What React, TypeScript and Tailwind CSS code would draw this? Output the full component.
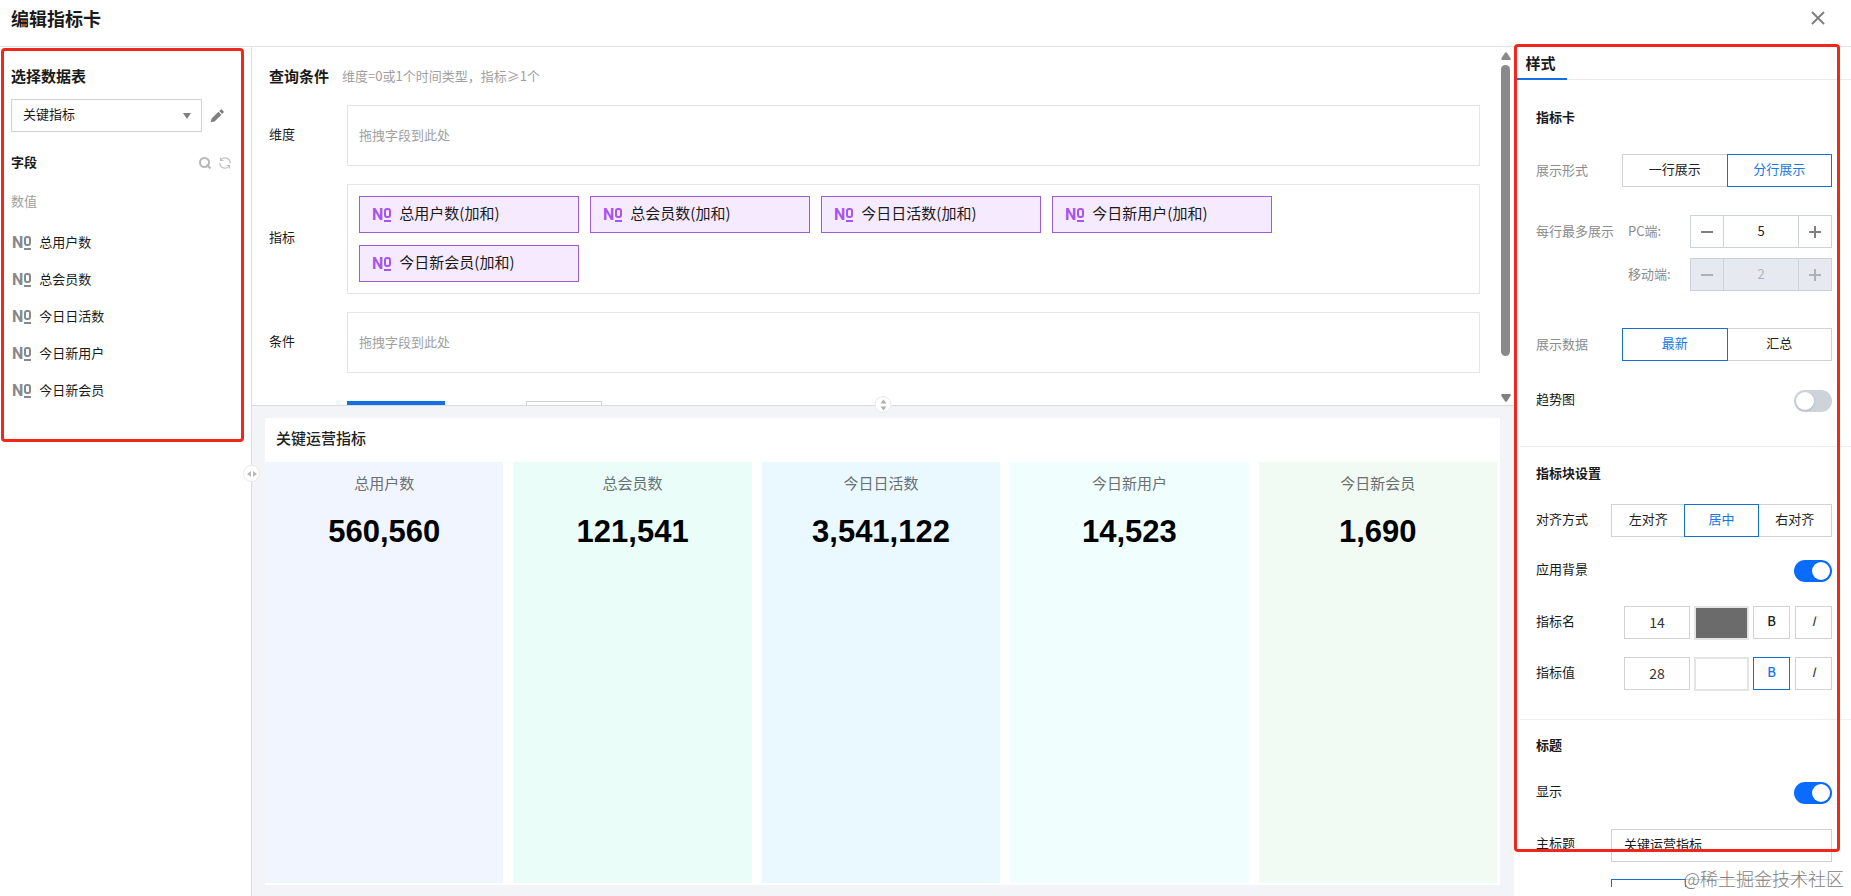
import { useId, useState } from "react";
import type { ReactNode } from "react";
import clsx from "clsx";

const fields = ["总用户数", "总会员数", "今日日活数", "今日新用户", "今日新会员"];

const metrics = [
  { name: "总用户数", value: "560,560", tone: "bg-[#f0f5ff]" },
  { name: "总会员数", value: "121,541", tone: "bg-[#eafdf9]" },
  { name: "今日日活数", value: "3,541,122", tone: "bg-[#eaf9ff]" },
  { name: "今日新用户", value: "14,523", tone: "bg-[#f0fffe]" },
  { name: "今日新会员", value: "1,690", tone: "bg-[#f1fbf4]" },
];

const NumberMark = ({ className }: { className: string }) => (
  <span aria-hidden="true" className={clsx("flex shrink-0 items-center gap-px", className)}>
    <span className="font-[Roboto,sans-serif] text-base leading-4 font-bold">N</span>
    <span className="flex flex-col items-center gap-0.5">
      <span className="h-[10px] w-[7px] rounded-[3px] border-2 border-current" />
      <span className="h-0.5 w-[7px] bg-current" />
    </span>
  </span>
);

const Segmented = ({
  label,
  options,
  initial,
  className,
}: {
  label: string;
  options: string[];
  initial: string;
  className: string;
}) => {
  const [active, setActive] = useState(initial);

  return (
    <div role="group" aria-label={label} className={clsx("flex", className)}>
      {options.map((option) => (
        <button
          key={option}
          type="button"
          aria-pressed={option === active}
          onClick={() => setActive(option)}
          className={clsx(
            "-ml-px h-[33px] flex-1 border pb-1 first:ml-0",
            option === active
              ? "z-10 border-[#1670d2] text-[#1677e6]"
              : "border-[#cfd3d6] text-[#222]",
          )}
        >
          {option}
        </button>
      ))}
    </div>
  );
};

const Stepper = ({
  label,
  initial,
  disabled = false,
}: {
  label: string;
  initial: number;
  disabled?: boolean;
}) => {
  const id = useId();
  const [value, setValue] = useState(initial);

  return (
    <div className="flex h-[33px] items-center justify-between">
      <label htmlFor={id} className="pb-0.5 text-[#8c8c8c]">
        {label}
      </label>
      <div
        className={clsx(
          "flex h-full w-[142px] border border-[#cdd2d6]",
          disabled ? "bg-[#e6e9ef] text-[#aeb2b8]" : "text-[#808080]",
        )}
      >
        <button
          type="button"
          aria-label="减少"
          disabled={disabled}
          onClick={() => setValue(value - 1)}
          className="flex w-8 items-center justify-center"
        >
          <svg viewBox="0 0 12 12" className="size-3" stroke="currentColor" strokeWidth="2">
            <path d="M0 6h12" />
          </svg>
        </button>
        <input
          id={id}
          value={value}
          readOnly
          disabled={disabled}
          className={clsx(
            "w-0 flex-1 border-x border-[#cdd2d6] pb-0.5 text-center",
            disabled ? "text-[#aeb2b8]" : "text-[#222]",
          )}
        />
        <button
          type="button"
          aria-label="增加"
          disabled={disabled}
          onClick={() => setValue(value + 1)}
          className="flex w-8 items-center justify-center"
        >
          <svg viewBox="0 0 12 12" className="size-3" stroke="currentColor" strokeWidth="2">
            <path d="M0 6h12M6 0v12" />
          </svg>
        </button>
      </div>
    </div>
  );
};

const SwitchRow = ({ label, on = false, className }: { label: string; on?: boolean; className: string }) => (
  <label className={clsx("flex h-[22px] items-center justify-between", className)}>
    <span className="pb-1">{label}</span>
    <input
      type="checkbox"
      role="switch"
      defaultChecked={on}
      className="h-[22px] w-[38px] appearance-none rounded-full bg-[#cdd2db] p-0.5 before:block before:size-[18px] before:rounded-full before:bg-white before:shadow before:content-[''] checked:bg-[#0a6cff] checked:pl-[18px]"
    />
  </label>
);

const TextStyleRow = ({
  label,
  size,
  color,
  bold,
  className,
}: {
  label: string;
  size: number;
  color: string;
  bold: boolean;
  className: string;
}) => {
  const id = useId();

  return (
    <div className={clsx("flex h-[33px] items-center", className)}>
      <label htmlFor={id} className="flex-1 pb-1">
        {label}
      </label>
      <input
        id={id}
        defaultValue={size}
        className="h-[33px] w-[66px] border border-[#cfd3d6] pb-0.5 text-center text-sm text-[#333]"
      />
      <button
        type="button"
        aria-label="颜色"
        className={clsx("ml-1 h-[34px] w-[55px] border-2 border-[#e2e4e6]", color)}
      />
      <button
        type="button"
        aria-pressed={bold}
        className={clsx(
          "ml-1 h-[33px] w-[37px] border pb-1 font-medium",
          bold ? "border-[#1670d2] text-[#1677e6]" : "border-[#cfd3d6] text-[#222]",
        )}
      >
        B
      </button>
      <button
        type="button"
        className="ml-[5px] h-[33px] w-[37px] border border-[#cfd3d6] pb-1 text-[#333] italic"
      >
        I
      </button>
    </div>
  );
};

const QueryRow = ({ label, children }: { label: string; children: ReactNode }) => (
  <div className="mt-[18px] flex items-center">
    <span className="w-[78px] shrink-0 pb-1">{label}</span>
    {children}
  </div>
);

const DropZone = () => (
  <div className="flex h-[61px] flex-1 items-center border border-[#e5e5e5] px-[11px] pb-0.5 text-[#a0a0a0]">
    拖拽字段到此处
  </div>
);

const FieldPanel = () => (
  <aside className="w-[252px] shrink-0 border-r border-[#dfdfdf] p-px">
    <div className="h-[394px] w-[243px] rounded-sm border-3 border-[#f0281c] pt-[17px] pr-2.5 pl-[7px]">
      <label htmlFor="dataset" className="block h-5 text-[15px] leading-4 font-bold">
        选择数据表
      </label>
      <div className="mt-[11px] flex items-center">
        <div className="relative">
          <select
            id="dataset"
            className="h-[33px] w-[191px] appearance-none border border-[#cfd3d6] bg-white px-[11px] pb-1"
          >
            <option>关键指标</option>
          </select>
          <svg
            viewBox="0 0 8 6"
            className="pointer-events-none absolute top-[14px] right-[11px] h-1.5 w-2 fill-[#808080]"
          >
            <path d="M0 0h8L4 6z" />
          </svg>
        </div>
        <button type="button" aria-label="编辑数据表" className="ml-2">
          <svg viewBox="0 0 14 14" className="size-3.5 fill-[#808080]">
            <path d="M.8 13.200l.8-3.800 6.800-6.600 3 3-6.800 6.600zM9.200 2l1.400-1.300a1 1 0 0 1 1.400 0l1.500 1.500a1 1 0 0 1 0 1.400L12.200 5z" />
          </svg>
        </button>
      </div>
      <div className="mt-[21px] flex h-5 items-center">
        <h2 className="flex-1 pb-0.5 font-bold">字段</h2>
        <button type="button" aria-label="搜索" className="text-[#b8b8b8]">
          <svg viewBox="0 0 12 12" className="size-3" fill="none" stroke="currentColor" strokeWidth="2">
            <circle cx="5.5" cy="5.5" r="4.5" />
            <path d="M7.500 7.500l4 4" />
          </svg>
        </button>
        <button type="button" aria-label="刷新" className="ml-2 text-[#c0c0c0]">
          <svg viewBox="0 0 12 12" className="size-3" fill="none" stroke="currentColor" strokeWidth="1.2">
            <path d="M11.200 6A5.200 5.200 0 0 0 1.800 3M.8 6a5.200 5.200 0 0 0 9.400 3M1.500.5v3h3M10.500 11.500v-3h-3" />
          </svg>
        </button>
      </div>
      <h3 className="mt-[19px] h-5 leading-[18px] text-[#a0a0a0]">数值</h3>
      <ul className="mt-3">
        {fields.map((field) => (
          <li key={field} className="flex h-[37px] items-center gap-2 pl-px">
            <NumberMark className="text-[#888]" />
            <span className="pb-0.5">{field}</span>
          </li>
        ))}
      </ul>
    </div>
  </aside>
);

const QueryPanel = () => (
  <section className="relative flex h-[359px] shrink-0 border-b border-[#d9dcdf]">
    <div className="min-w-0 flex-1 overflow-hidden pt-5 pr-5 pl-[17px]">
      <div className="flex h-5 items-center gap-[13px] pb-0.5">
        <h2 className="text-[15px] font-bold">查询条件</h2>
        <p className="text-[#a0a0a0]">维度=0或1个时间类型，指标≥1个</p>
      </div>
      <QueryRow label="维度">
        <DropZone />
      </QueryRow>
      <QueryRow label="指标">
        <ul className="flex flex-1 flex-wrap gap-x-[11px] gap-y-3 border border-[#e5e5e5] p-[11px]">
          {fields.map((field) => (
            <li
              key={field}
              className="flex h-[37px] w-[220px] items-center gap-2 border border-[#9b5fd0] bg-[#f6eafe] px-3 text-[15px]"
            >
              <NumberMark className="text-[#a855f0]" />
              <span className="pb-0.5">{field}(加和)</span>
            </li>
          ))}
        </ul>
      </QueryRow>
      <QueryRow label="条件">
        <DropZone />
      </QueryRow>
      <div className="mt-7 ml-[78px] flex gap-[81px]">
        <button type="button" aria-label="查询" className="h-[33px] w-[98px] bg-[#126fe4]" />
        <button type="button" aria-label="重置" className="h-[33px] w-[76px] border border-[#cfd3d6]" />
      </div>
    </div>
    <div className="mr-[3px] flex w-[11px] flex-col items-center pt-[5px] pb-[3px]">
      <svg viewBox="0 0 10 8" className="h-2 w-2.5 fill-[#8a8a8a]">
        <path d="M4 .8Q5-.3 6 .8l3.6 5.4Q10 8 9 8H1Q0 8 .4 6.200z" />
      </svg>
      <div className="mt-[5px] h-[291px] w-[9px] rounded-full bg-[#8a8a8a]" />
      <svg viewBox="0 0 10 8" className="mt-auto h-2 w-2.5 rotate-180 fill-[#808080]">
        <path d="M4 .8Q5-.3 6 .8l3.6 5.4Q10 8 9 8H1Q0 8 .4 6.200z" />
      </svg>
    </div>
    <button
      type="button"
      aria-label="调整高度"
      className="absolute -bottom-2 left-1/2 flex size-[17px] -translate-x-1/2 items-center justify-center rounded-full border border-[#e8e8e8] bg-white"
    >
      <svg viewBox="0 0 8 12" className="h-3 w-2 fill-[#b0b0b0]">
        <path d="M1 4.500h6L4 .5zM1 7.500h6L4 11.500z" />
      </svg>
    </button>
  </section>
);

const Preview = () => (
  <section className="flex min-h-0 flex-1 flex-col bg-[#f2f4f7] pt-3 pr-3.5 pb-[11px] pl-[13px]">
    <div className="flex flex-1 flex-col bg-white pb-0.5">
      <h2 className="h-11 pl-[11px] text-[15px] leading-10 font-medium text-[#222]">关键运营指标</h2>
      <div className="grid flex-1 grid-cols-5 gap-2.5 pr-[3px]">
        {metrics.map(({ name, value, tone }) => (
          <article key={name} className={clsx("pt-[11px] text-center", tone)}>
            <h3 className="text-[15px] leading-5 text-[#6b6f73]">{name}</h3>
            <p className="mt-[19px] font-['Liberation_Sans',Arial,sans-serif] text-[31px] leading-10 font-bold text-black">
              {value}
            </p>
          </article>
        ))}
      </div>
    </div>
  </section>
);

const StylePanel = () => (
  <aside className="relative flex w-[337px] shrink-0 flex-col bg-white">
    <div role="tablist" className="flex h-[33px] shrink-0 border-b border-[#e8eaec]">
      <button
        type="button"
        role="tab"
        aria-selected="true"
        className="-mb-px w-[53px] border-b-2 border-[#126fe4] pt-0.5 text-[15px] font-bold"
      >
        样式
      </button>
    </div>
    <div className="mb-[9px] ml-1.5 min-h-0 flex-1 overflow-hidden">
      <section className="border-b border-[#eceeef] pt-7 pr-[19px] pb-[34px] pl-4">
        <h2 className="h-5 leading-[18px] font-bold">指标卡</h2>
        <div className="mt-[26px] flex items-center justify-between">
          <span className="pb-0.5 text-[#8c8c8c]">展示形式</span>
          <Segmented
            label="展示形式"
            options={["一行展示", "分行展示"]}
            initial="分行展示"
            className="w-[210px]"
          />
        </div>
        <div className="mt-7 flex">
          <span className="h-[33px] w-[92px] leading-[31px] text-[#8c8c8c]">每行最多展示</span>
          <div className="flex flex-1 flex-col gap-2.5">
            <Stepper label="PC端:" initial={5} />
            <Stepper label="移动端:" initial={2} disabled />
          </div>
        </div>
        <div className="mt-[37px] flex items-center justify-between">
          <span className="pb-0.5 text-[#8c8c8c]">展示数据</span>
          <Segmented label="展示数据" options={["最新", "汇总"]} initial="最新" className="w-[210px]" />
        </div>
        <SwitchRow label="趋势图" className="mt-[29px]" />
      </section>
      <section className="border-b border-[#eceeef] pt-[17px] pr-[19px] pb-[29px] pl-4">
        <h2 className="h-5 leading-[18px] font-bold">指标块设置</h2>
        <div className="mt-5 flex items-center justify-between">
          <span className="pb-1">对齐方式</span>
          <Segmented
            label="对齐方式"
            options={["左对齐", "居中", "右对齐"]}
            initial="居中"
            className="w-[221px]"
          />
        </div>
        <SwitchRow label="应用背景" on className="mt-[23px]" />
        <TextStyleRow label="指标名" size={14} color="bg-[#6b6b6b]" bold={false} className="mt-6" />
        <TextStyleRow label="指标值" size={28} color="bg-white" bold className="mt-[18px]" />
      </section>
      <section className="pt-4 pr-[19px] pl-4">
        <h2 className="h-5 leading-[18px] font-bold">标题</h2>
        <SwitchRow label="显示" on className="mt-[26px]" />
        <div className="mt-[25px] flex items-center justify-between">
          <label htmlFor="main-title" className="pb-1.5">
            主标题
          </label>
          <input
            id="main-title"
            defaultValue="关键运营指标"
            className="h-[33px] w-[221px] border border-[#cfd3d6] px-3 pb-1"
          />
        </div>
        <div className="mt-[17px] ml-[75px] flex">
          <button type="button" aria-label="标题左对齐" className="h-[33px] w-[75px] border border-[#1670d2]" />
          <button type="button" aria-label="标题居中" className="h-[33px] w-[74px] border border-l-0 border-[#cfd3d6]" />
          <button type="button" aria-label="标题右对齐" className="h-[33px] w-[72px] border border-l-0 border-[#cfd3d6]" />
        </div>
      </section>
    </div>
    <div className="pointer-events-none absolute -top-[3px] right-[11px] left-0 h-[808px] rounded-sm border-3 border-[#f0281c]" />
    <p className="pointer-events-none absolute right-[7px] bottom-1.5 text-lg leading-6 font-light text-[#808080]">
      @稀土掘金技术社区
    </p>
  </aside>
);

const App = () => (
  <div className="flex h-screen min-h-[600px] flex-col overflow-hidden bg-white font-['Noto_Sans_CJK_SC',sans-serif] text-[13px] text-[#1a1a1a]">
    <header className="flex h-[47px] shrink-0 items-center justify-between border-b border-[#e5e5e5] pr-[26px] pb-2.5 pl-[11px]">
      <h1 className="text-lg leading-6 font-bold">编辑指标卡</h1>
      <button type="button" aria-label="关闭">
        <svg viewBox="0 0 14 14" className="size-3.5" fill="none" stroke="#808080" strokeWidth="2">
          <path d="M1 1l12 12M13 1L1 13" />
        </svg>
      </button>
    </header>
    <div className="flex min-h-0 flex-1">
      <FieldPanel />
      <main className="relative flex min-w-0 flex-1 flex-col">
        <QueryPanel />
        <Preview />
        <button
          type="button"
          aria-label="调整宽度"
          className="absolute top-[418px] -left-[9px] flex size-[17px] items-center justify-center rounded-full border border-[#e8e8e8] bg-white"
        >
          <svg viewBox="0 0 12 8" className="h-2 w-3 fill-[#b8b8b8]">
            <path d="M5 1v6L1 4zM7 1v6l4-3z" />
          </svg>
        </button>
      </main>
      <StylePanel />
    </div>
  </div>
);

export default App;
